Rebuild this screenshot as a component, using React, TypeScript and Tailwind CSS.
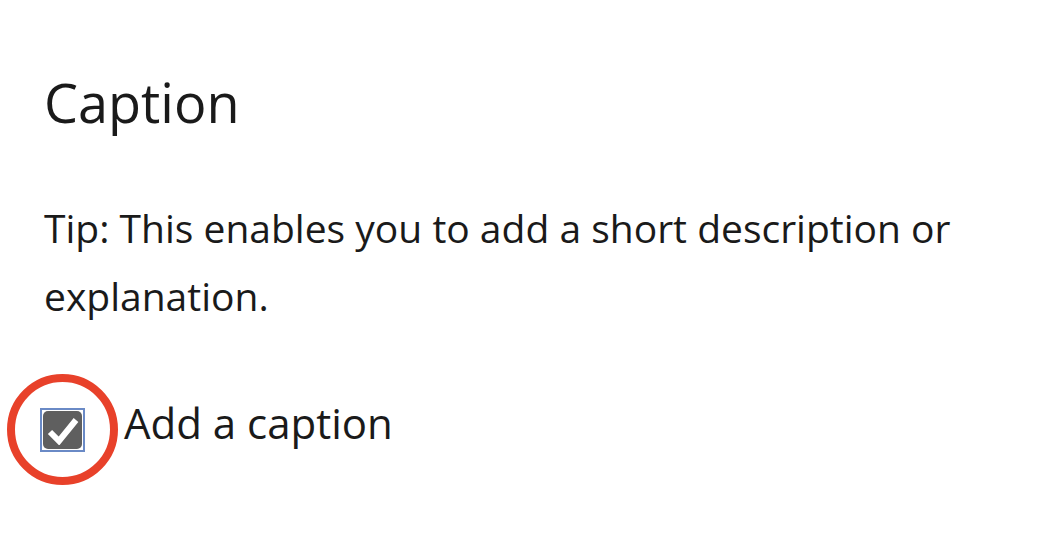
export default function App() {
  return (
    <div
      className="relative w-[1056px] h-[536px] bg-white text-[#1a1a1a] overflow-hidden pl-[44px]"
      style={{ fontFamily: '"Open Sans", "Noto Sans", sans-serif' }}
    >
      <h1 className="pt-[66px] text-[54px] leading-[72px] font-normal">Caption</h1>

      <p className="mt-[56px] text-[39px] leading-[68px] w-[990px]">
        Tip: This enables you to add a short description or explanation.
      </p>

      <label className="mt-[65px] flex items-start gap-[39px] ml-[-4px]">
        <span className="mt-[13px] w-[45px] h-[44px] border-2 border-[#6a8ac6] p-[1px] bg-white shrink-0">
          <span className="flex w-full h-full items-center justify-center rounded-[5px] bg-[#5f5f5f]">
            <svg width="34" height="30" viewBox="0 0 34 30" fill="none">
              <path d="M4 17 L13 26 L30 5" stroke="white" strokeWidth="6" strokeLinejoin="miter" />
            </svg>
          </span>
        </span>
        <span className="text-[42px] leading-[56px]">Add a caption</span>
      </label>

      {/* annotation ring */}
      <div className="absolute left-[7px] top-[374px] w-[111px] h-[111px] rounded-full border-[8px] border-[#e8412a] pointer-events-none" />
    </div>
  );
}
